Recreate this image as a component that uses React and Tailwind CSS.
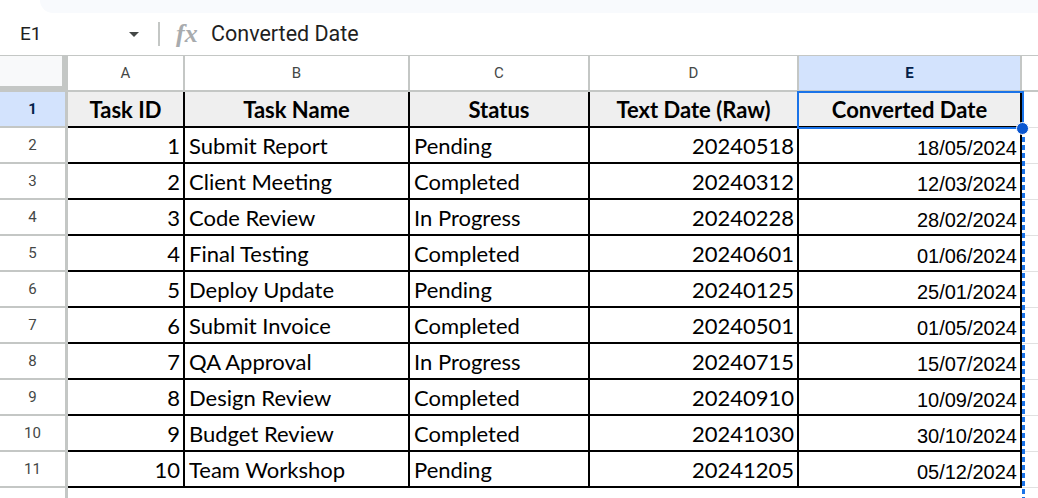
import React from 'react';

const COLS = [
  { key: 'A', w: 'w-[117px]' },
  { key: 'B', w: 'w-[225px]' },
  { key: 'C', w: 'w-[180px]' },
  { key: 'D', w: 'w-[209px]' },
  { key: 'E', w: 'w-[223px]' },
];

const HEAD = ['Task ID', 'Task Name', 'Status', 'Text Date (Raw)', 'Converted Date'];

const ROWS = [
  [1, 'Submit Report', 'Pending', '20240518', '18/05/2024'],
  [2, 'Client Meeting', 'Completed', '20240312', '12/03/2024'],
  [3, 'Code Review', 'In Progress', '20240228', '28/02/2024'],
  [4, 'Final Testing', 'Completed', '20240601', '01/06/2024'],
  [5, 'Deploy Update', 'Pending', '20240125', '25/01/2024'],
  [6, 'Submit Invoice', 'Completed', '20240501', '01/05/2024'],
  [7, 'QA Approval', 'In Progress', '20240715', '15/07/2024'],
  [8, 'Design Review', 'Completed', '20240910', '10/09/2024'],
  [9, 'Budget Review', 'Completed', '20241030', '30/10/2024'],
  [10, 'Team Workshop', 'Pending', '20241205', '05/12/2024'],
];

const cell = 'h-full flex items-center border-r-2 border-b-2 border-black overflow-hidden whitespace-nowrap';
const calibri = "font-['Lato',sans-serif] text-[22px] text-black pt-[1px]";
const arial = "font-['Liberation_Sans',Arial,sans-serif] text-[20px] text-black pt-[5px]";

function RowHead({ n, active }) {
  return (
    <div
      className={`w-[68px] h-full shrink-0 flex items-center justify-center border-r-[3px] border-b-2 border-[#c4c7c5] font-['Roboto',sans-serif] text-[15px] ${
        active ? 'bg-[#d3e3fd] text-[#041e49] font-bold' : 'bg-white text-[#444746]'
      }`}
    >
      {n}
    </div>
  );
}

export default function App() {
  return (
    <div className="w-[1038px] h-[498px] overflow-hidden bg-white">
      {/* formula bar */}
      <div className="h-[13px] ml-[40px] bg-[#f8fafd] rounded-bl-[14px]" />
      <div className="h-[43px] flex items-center pl-[20px] border-b border-[#c4c7c5] font-['Roboto',sans-serif]">
        <span className="w-[109px] text-[19px] text-[#1f1f1f]">E1</span>
        <svg width="10" height="5" viewBox="0 0 10 5">
          <path d="M0 0h10L5 5z" fill="#444746" />
        </svg>
        <div className="ml-[19px] w-[2px] h-[24px] bg-[#c4c7c5]" />
        <span className="ml-[16px] w-[22px] font-['Liberation_Serif',serif] italic font-bold text-[26px] leading-none text-[#a8abae]">
          fx
        </span>
        <span className="ml-[13px] text-[21.5px] text-[#1f1f1f]">Converted Date</span>
      </div>

      {/* sheet */}
      <div className="relative">
        <div className="flex h-[36px]">
          <div className="w-[68px] h-full shrink-0 bg-[#f8f9fa] border-r-[6px] border-b-[6px] border-[#c4c7c5]" />
          {COLS.map((c) => (
            <div
              key={c.key}
              className={`${c.w} h-full shrink-0 flex items-center justify-center border-r-2 border-b-2 border-[#c4c7c5] font-['Roboto',sans-serif] text-[15px] ${
                c.key === 'E' ? 'bg-[#d3e3fd] text-[#041e49] font-bold' : 'bg-white text-[#444746]'
              }`}
            >
              {c.key}
            </div>
          ))}
          <div className="flex-1 h-full border-b-2 border-[#c4c7c5]" />
        </div>

        {/* header row */}
        <div className="flex h-[36px]">
          <RowHead n={1} active />
          {HEAD.map((h, i) => (
            <div
              key={h}
              className={`${COLS[i].w} shrink-0 ${cell} justify-center bg-[#efefef] font-bold ${calibri}`}
            >
              {h}
            </div>
          ))}
          <div className="flex-1 h-full border-b border-[#e1e1e1]" />
        </div>

        {ROWS.map((r, idx) => (
          <div key={r[0]} className="flex h-[36px]">
            <RowHead n={idx + 2} />
            <div className={`${COLS[0].w} shrink-0 ${cell} justify-end pr-[3px] ${calibri}`}>{r[0]}</div>
            <div className={`${COLS[1].w} shrink-0 ${cell} pl-[4px] ${calibri}`}>{r[1]}</div>
            <div className={`${COLS[2].w} shrink-0 ${cell} pl-[4px] ${calibri}`}>{r[2]}</div>
            <div className={`${COLS[3].w} shrink-0 ${cell} justify-end pr-[3px] ${calibri}`}>{r[3]}</div>
            <div className={`${COLS[4].w} shrink-0 ${cell} justify-end pr-[3px] ${arial}`}>{r[4]}</div>
            <div className="flex-1 h-full border-b border-[#e1e1e1]" />
          </div>
        ))}

        <div className="flex h-[36px]">
          <RowHead n={12} />
          <div className="flex-1" />
        </div>

        {/* selection overlays */}
        <div className="absolute left-[797px] top-[35px] w-[227px] h-[38px] border-2 border-[#1a73e8]" />
        <div className="absolute left-[1022px] top-[73px] bottom-0 w-[3px] bg-[repeating-linear-gradient(to_bottom,#1a73e8_0_5px,transparent_5px_8px)]" />
        <div className="absolute left-[1016px] top-[66px] w-[13px] h-[13px] rounded-full bg-[#0b57d0] border border-white" />
      </div>
    </div>
  );
}
